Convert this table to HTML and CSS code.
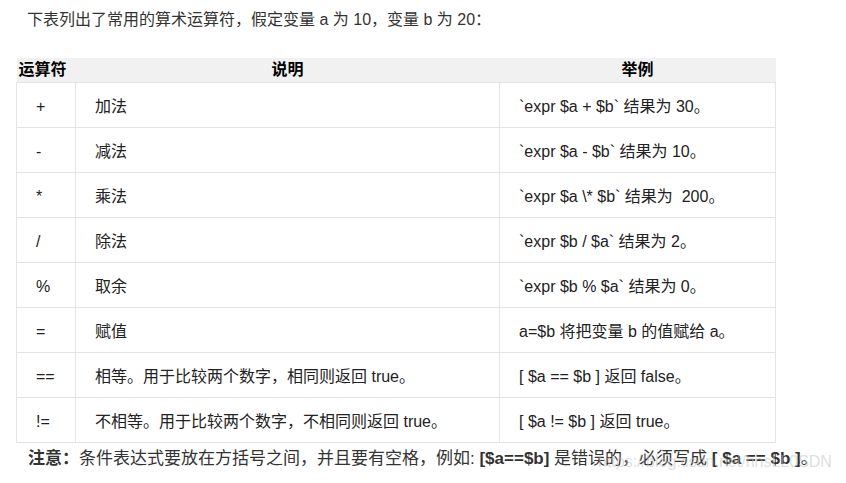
FILE: index.html
```html
<!DOCTYPE html>
<html lang="zh-CN">
<head>
<meta charset="utf-8">
<title>算术运算符</title>
<link rel="stylesheet" href="styles.css">
</head>
<body>
<p class="intro">下表列出了常用的算术运算符，假定变量 a 为 10，变量 b 为 20：</p>
<table class="ops">
  <colgroup>
    <col class="c1"><col class="c2"><col class="c3">
  </colgroup>
  <thead>
    <tr><th class="left">运算符</th><th>说明</th><th>举例</th></tr>
  </thead>
  <tbody>
    <tr><td>+</td><td>加法</td><td>`expr $a + $b` 结果为 30。</td></tr>
    <tr><td>-</td><td>减法</td><td>`expr $a - $b` 结果为 10。</td></tr>
    <tr><td>*</td><td>乘法</td><td>`expr $a \* $b` 结果为&nbsp; 200。</td></tr>
    <tr><td>/</td><td>除法</td><td>`expr $b / $a` 结果为 2。</td></tr>
    <tr><td>%</td><td>取余</td><td>`expr $b % $a` 结果为 0。</td></tr>
    <tr><td>=</td><td>赋值</td><td>a=$b 将把变量 b 的值赋给 a。</td></tr>
    <tr><td>==</td><td>相等。用于比较两个数字，相同则返回 true。</td><td>[ $a == $b ] 返回 false。</td></tr>
    <tr><td>!=</td><td>不相等。用于比较两个数字，不相同则返回 true。</td><td>[ $a != $b ] 返回 true。</td></tr>
  </tbody>
</table>
<div class="note-wrap">
  <p class="note"><b>注意：</b>条件表达式要放在方括号之间，并且要有空格，例如: <b>[$a==$b]</b> 是错误的，必须写成 <b>[ $a == $b ]</b>。</p>
  <span class="watermark">https://blog.csdn.net/hnsLL0SDN</span>
</div>
</body>
</html>
```
FILE: styles.css
```css
html, body {
  margin: 0;
  background: #fff;
}
body {
  font-family: "Liberation Sans", "Noto Sans CJK SC", sans-serif;
  font-size: 16px;
  color: #222;
}
.intro {
  margin: 0;
  padding: 8px 0 0 27px;
  line-height: 24px;
  color: #333;
}
.ops {
  margin: 26px 0 0 16px;
  border-collapse: collapse;
  table-layout: fixed;
  width: 759px;
}
.c1 { width: 59px; }
.c2 { width: 424px; }
.c3 { width: 276px; }
.ops th {
  background: #f1f1f1;
  height: 24px;
  padding: 0;
  font-weight: bold;
  color: #000;
  text-align: center;
  border-bottom: 1px solid #e4e4e4;
  line-height: 24px;
}
.ops th.left {
  text-align: left;
  padding-left: 2px;
}
.ops td {
  border: 1px solid #e4e4e4;
  height: 45px;
  padding: 4px 19px 0;
  box-sizing: border-box;
  line-height: 20px;
  vertical-align: middle;
  white-space: nowrap;
}
.note-wrap {
  position: relative;
  margin-top: 3px;
}
.note {
  margin: 0;
  padding-left: 28px;
  font-size: 17px;
  line-height: 26px;
  color: #333;
  white-space: nowrap;
}
.note b {
  color: #333;
}
.watermark {
  position: absolute;
  left: 598px;
  top: 6px;
  font-size: 16px;
  line-height: 20px;
  color: rgba(190, 190, 190, 0.5);
  white-space: nowrap;
  pointer-events: none;
}
```
